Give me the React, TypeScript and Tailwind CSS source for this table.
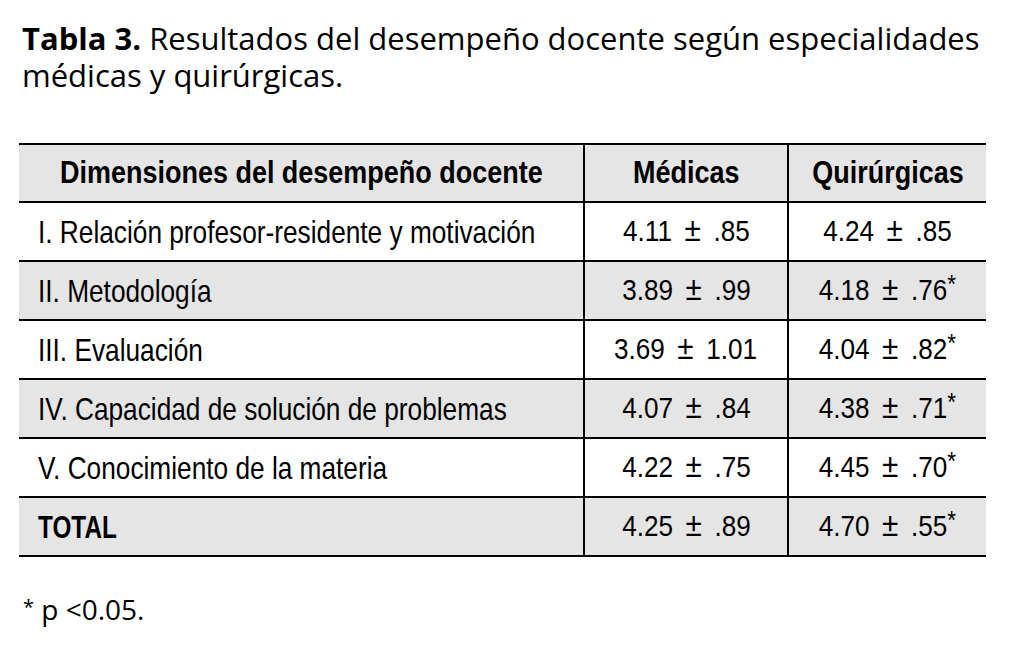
const rows = [
  { label: "I. Relación profesor-residente y motivación", med: "4.11", medSd: ".85", qui: "4.24", quiSd: ".85", star: false, gray: false },
  { label: "II. Metodología", med: "3.89", medSd: ".99", qui: "4.18", quiSd: ".76", star: true, gray: true },
  { label: "III. Evaluación", med: "3.69", medSd: "1.01", qui: "4.04", quiSd: ".82", star: true, gray: false },
  { label: "IV. Capacidad de solución de problemas", med: "4.07", medSd: ".84", qui: "4.38", quiSd: ".71", star: true, gray: true },
  { label: "V. Conocimiento de la materia", med: "4.22", medSd: ".75", qui: "4.45", quiSd: ".70", star: true, gray: false },
]

// condensed look: no narrow face installed, so squeeze Liberation Sans
const Val = ({ mean, sd, star }: { mean: string; sd: string; star?: boolean }) => (
  <span className="inline-block whitespace-nowrap scale-x-[0.9] text-[29px]">
    {mean}
    <span className="mx-[14px] text-[33px] leading-none">±</span>
    {sd}
    {star && <span className="relative -top-[7px] text-[25px] leading-none">*</span>}
  </span>
)

const Head = ({ children }: { children: React.ReactNode }) => (
  <span className="inline-block whitespace-nowrap scale-x-[0.87] text-[31px] font-bold">{children}</span>
)

export default function App() {
  return (
    <div className="w-[1012px] h-[654px] bg-white text-black pt-[20px]">
      <p className="px-[22px] text-[31px] leading-[37px] whitespace-nowrap font-['Open_Sans',sans-serif]">
        <span className="font-bold">Tabla 3.</span> Resultados del desempeño docente según especialidades
        <br />
        médicas y quirúrgicas.
      </p>

      <table className="ml-[19px] mt-[49px] w-[967px] table-fixed border-collapse font-['Liberation_Sans',Arial,sans-serif]">
        <thead>
          <tr className="bg-[#e5e5e5] h-[58px] border-t-2 border-b-2 border-black">
            <th className="w-[565px] text-center">
              <Head>Dimensiones del desempeño docente</Head>
            </th>
            <th className="w-[204px] text-center border-l-2 border-black">
              <Head>Médicas</Head>
            </th>
            <th className="text-center border-l-2 border-black">
              <Head>Quirúrgicas</Head>
            </th>
          </tr>
        </thead>
        <tbody>
          {rows.map((r) => (
            <tr key={r.label} className={`h-[59px] border-b-2 border-black ${r.gray ? "bg-[#e5e5e5]" : "bg-white"}`}>
              <td className="pl-[19px] text-left">
                <span className="inline-block whitespace-nowrap origin-left scale-x-[0.82] text-[32px]">{r.label}</span>
              </td>
              <td className="text-center border-l-2 border-black">
                <Val mean={r.med} sd={r.medSd} />
              </td>
              <td className="text-center border-l-2 border-black">
                <Val mean={r.qui} sd={r.quiSd} star={r.star} />
              </td>
            </tr>
          ))}
          <tr className="h-[59px] border-b-2 border-black bg-[#e5e5e5]">
            <td className="pl-[19px] text-left">
              <span className="inline-block whitespace-nowrap origin-left scale-x-[0.76] text-[32px] font-bold">TOTAL</span>
            </td>
            <td className="text-center border-l-2 border-black">
              <Val mean="4.25" sd=".89" />
            </td>
            <td className="text-center border-l-2 border-black">
              <Val mean="4.70" sd=".55" star />
            </td>
          </tr>
        </tbody>
      </table>

      <p className="mt-[31px] px-[23px] text-[28px] font-['Open_Sans',sans-serif]">
        <span className="relative -top-[6px] text-[20px]">*</span> p &lt;0.05.
      </p>
    </div>
  )
}
